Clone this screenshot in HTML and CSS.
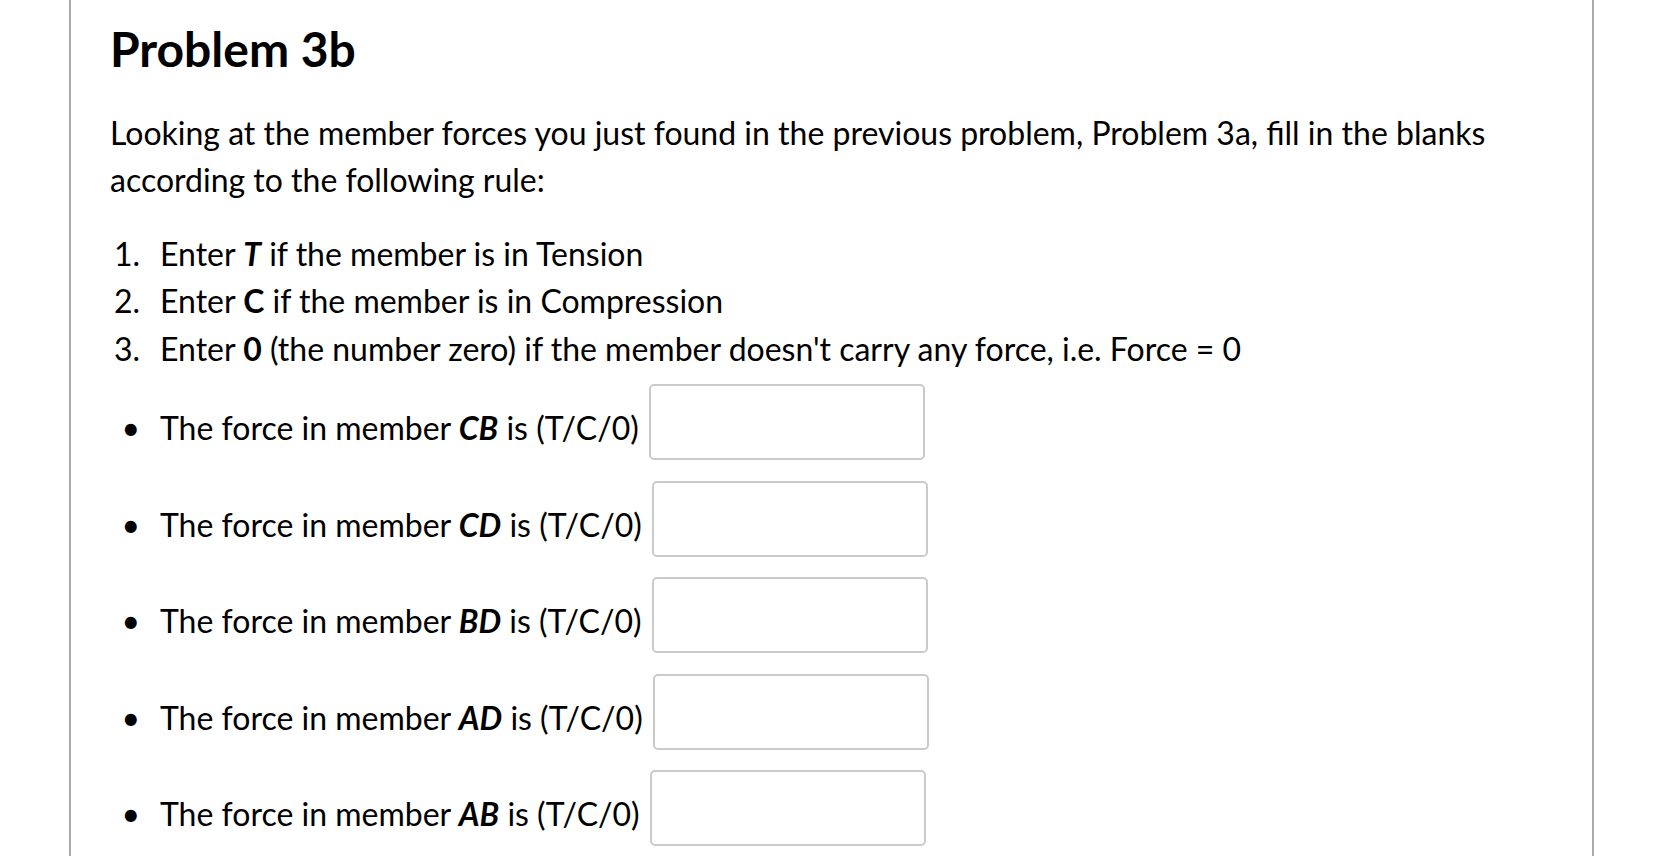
FILE: index.html
```html
<!DOCTYPE html>
<html lang="en">
<head>
<meta charset="utf-8">
<title>Problem 3b</title>
<link rel="stylesheet" href="styles.css">
</head>
<body>
<div class="page">
  <h2 class="title">Problem 3b</h2>
  <p class="intro">Looking at the member forces you just found in the previous problem, Problem 3a, fill in the blanks according to the following rule:</p>
  <ol class="rules">
    <li>Enter <strong><em>T</em></strong> if the member is in Tension</li>
    <li>Enter <strong>C</strong> if the member is in Compression</li>
    <li>Enter <strong>0</strong> (the number zero) if the member doesn't carry any force, i.e. Force = 0</li>
  </ol>
  <ul class="answers">
    <li>The force in member <strong><em>CB</em></strong> is (T/C/0) <input class="blank" type="text" aria-label="CB"></li>
    <li>The force in member <strong><em>CD</em></strong> is (T/C/0) <input class="blank" type="text" aria-label="CD"></li>
    <li>The force in member <strong><em>BD</em></strong> is (T/C/0) <input class="blank" type="text" aria-label="BD"></li>
    <li>The force in member <strong><em>AD</em></strong> is (T/C/0) <input class="blank" type="text" aria-label="AD"></li>
    <li>The force in member <strong><em>AB</em></strong> is (T/C/0) <input class="blank" type="text" aria-label="AB"></li>
  </ul>
</div>
</body>
</html>
```
FILE: styles.css
```css
html, body {
  margin: 0;
  padding: 0;
  background: #fff;
}
body {
  font-family: Lato, "Noto Sans", sans-serif;
  color: #000;
  overflow: hidden;
}
.page {
  margin: 0 62px 0 69px;
  min-height: 856px;
  border-left: 2px solid #a9a9a9;
  border-right: 2px solid #a9a9a9;
  padding: 20px 40px 0 39px;
  box-sizing: border-box;
}
.title {
  margin: 0;
  font-size: 48px;
  font-weight: 700;
  line-height: 1.2;
}
.intro {
  margin: 31px 0 0;
  font-size: 32px;
  line-height: 47.5px;
}
.rules {
  margin: 26px 0 0;
  padding-left: 50px;
  font-size: 32px;
  line-height: 47.5px;
}
.rules li::marker {
  content: counter(list-item) ".\2002\2009";
}
.answers {
  margin: 12px 0 0;
  padding-left: 50px;
  font-size: 32px;
  line-height: 46.5px;
}
.answers li {
  margin-bottom: 20.6px;
}
.answers li::marker {
  content: "\2022\2002\2009";
}
.blank {
  box-sizing: border-box;
  width: 276px;
  height: 76px;
  margin: 0 0 0 2px;
  padding: 0 10px;
  border: 2px solid #cacaca;
  border-radius: 5px;
  background: #fff;
  font-family: Lato, sans-serif;
  font-size: 30px;
  vertical-align: 6px;
  outline: none;
}
```
